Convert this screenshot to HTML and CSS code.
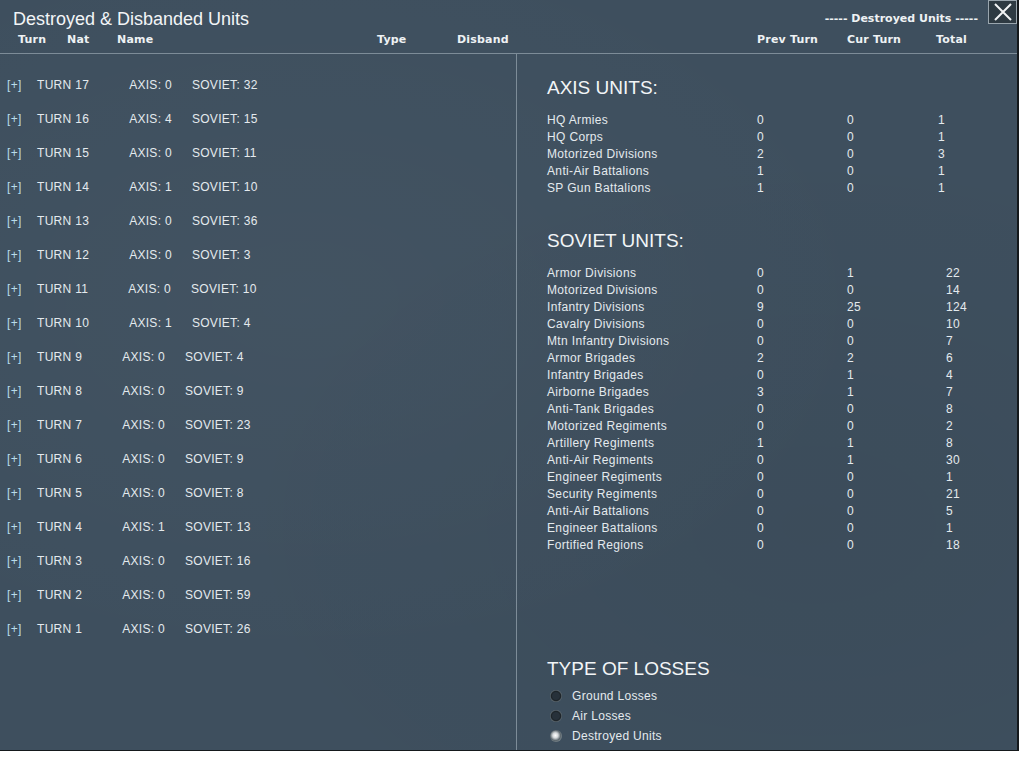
FILE: index.html
```html
<!DOCTYPE html>
<html lang="en">
<head>
  <meta charset="UTF-8">
  <title>Destroyed &amp; Disbanded Units</title>
  <link rel="stylesheet" href="styles.css">
</head>
<body>

<div class="window">
  <div class="header">
    <div class="title-row">
      <h1 class="title">Destroyed &amp; Disbanded Units</h1>
      <div class="subtitle">----- Destroyed Units -----</div>
    </div>
    <div class="col-row">
      <span class="c-turn">Turn</span>
      <span class="c-nat">Nat</span>
      <span class="c-name">Name</span>
      <span class="c-type">Type</span>
      <span class="c-disband">Disband</span>
      <span class="c-prev">Prev Turn</span>
      <span class="c-cur">Cur Turn</span>
      <span class="c-total">Total</span>
    </div>
    <button class="close-btn" aria-label="Close">
      <svg width="20" height="20" viewBox="0 0 20 20">
        <path d="M2 2 L18 18 M18 2 L2 18" stroke="#f2f4f5" stroke-width="2" fill="none"/>
      </svg>
    </button>
  </div>

  <div class="content">
    <div class="turn-list" id="turnList"></div>

    <div class="summary">
      <h2 class="section-title">AXIS UNITS:</h2>
      <div class="unit-table" id="axisTable"></div>

      <h2 class="section-title soviet-title">SOVIET UNITS:</h2>
      <div class="unit-table soviet" id="sovietTable"></div>

      <h2 class="section-title losses-title">TYPE OF LOSSES</h2>
      <div class="radio-group">
        <label class="radio"><span class="dot"></span>Ground Losses</label>
        <label class="radio"><span class="dot"></span>Air Losses</label>
        <label class="radio"><span class="dot on"></span>Destroyed Units</label>
      </div>
    </div>
  </div>
</div>

<script>
  const turns = [
    [17, 0, 32], [16, 4, 15], [15, 0, 11], [14, 1, 10], [13, 0, 36], [12, 0, 3],
    [11, 0, 10], [10, 1, 4], [9, 0, 4], [8, 0, 9], [7, 0, 23], [6, 0, 9],
    [5, 0, 8], [4, 1, 13], [3, 0, 16], [2, 0, 59], [1, 0, 26]
  ];

  const axis = [
    ['HQ Armies', 0, 0, 1],
    ['HQ Corps', 0, 0, 1],
    ['Motorized Divisions', 2, 0, 3],
    ['Anti-Air Battalions', 1, 0, 1],
    ['SP Gun Battalions', 1, 0, 1]
  ];

  const soviet = [
    ['Armor Divisions', 0, 1, 22],
    ['Motorized Divisions', 0, 0, 14],
    ['Infantry Divisions', 9, 25, 124],
    ['Cavalry Divisions', 0, 0, 10],
    ['Mtn Infantry Divisions', 0, 0, 7],
    ['Armor Brigades', 2, 2, 6],
    ['Infantry Brigades', 0, 1, 4],
    ['Airborne Brigades', 3, 1, 7],
    ['Anti-Tank Brigades', 0, 0, 8],
    ['Motorized Regiments', 0, 0, 2],
    ['Artillery Regiments', 1, 1, 8],
    ['Anti-Air Regiments', 0, 1, 30],
    ['Engineer Regiments', 0, 0, 1],
    ['Security Regiments', 0, 0, 21],
    ['Anti-Air Battalions', 0, 0, 5],
    ['Engineer Battalions', 0, 0, 1],
    ['Fortified Regions', 0, 0, 18]
  ];

  const list = document.getElementById('turnList');
  turns.forEach(t => {
    const row = document.createElement('div');
    row.className = 'turn-row';
    row.innerHTML =
      '<span class="expand">[+]</span>' +
      '<span class="turn">TURN ' + t[0] + '</span>' +
      '<span class="axis">AXIS: ' + t[1] + '</span>' +
      '<span class="sov">SOVIET: ' + t[2] + '</span>';
    list.appendChild(row);
  });

  function fillTable(id, rows) {
    const table = document.getElementById(id);
    rows.forEach(r => {
      const row = document.createElement('div');
      row.className = 'unit-row';
      row.innerHTML =
        '<span class="u-name">' + r[0] + '</span>' +
        '<span class="u-prev">' + r[1] + '</span>' +
        '<span class="u-cur">' + r[2] + '</span>' +
        '<span class="u-total">' + r[3] + '</span>';
      table.appendChild(row);
    });
  }

  fillTable('axisTable', axis);
  fillTable('sovietTable', soviet);
</script>

</body>
</html>
```

FILE: styles.css
```css
* {
  box-sizing: border-box;
}

body {
  margin: 0;
  background: #ffffff;
  font-family: 'Liberation Sans', Arial, sans-serif;
  color: #e4eaee;
}

.window {
  width: 1019px;
  height: 751px;
  background-color: #3e4f5e;
  background-image:
    radial-gradient(ellipse at 30% 40%, rgba(255,255,255,0.025), transparent 60%),
    radial-gradient(ellipse at 80% 70%, rgba(0,0,0,0.04), transparent 55%);
  border-right: 2px solid #15191c;
  border-bottom: 1px solid #15191c;
  box-shadow: 0 3px 0 #c4c5bd, 0 4px 0 #6a6b66;
  display: flex;
  flex-direction: column;
}

/* header */

.header {
  position: relative;
  height: 54px;
  flex-shrink: 0;
  border-bottom: 1px solid #7d8c98;
}

.title-row {
  display: flex;
  justify-content: space-between;
  align-items: flex-end;
  padding: 7px 39px 0 13px;
  height: 30px;
}

.title {
  margin: 0;
  font-size: 18px;
  font-weight: normal;
  line-height: 21px;
  color: #f2f5f7;
}

.subtitle {
  font-family: 'DejaVu Sans', Verdana, sans-serif;
  font-weight: bold;
  font-size: 11px;
  line-height: 13px;
  margin-bottom: 5px;
  color: #eef2f4;
}

.col-row {
  display: flex;
  padding: 2px 0 0 18px;
  font-family: 'DejaVu Sans', Verdana, sans-serif;
  font-weight: bold;
  font-size: 11px;
  line-height: 16px;
  letter-spacing: 0.2px;
  color: #eef2f4;
}

.c-turn { width: 49px; }
.c-nat { width: 50px; }
.c-name { width: 260px; }
.c-type { width: 80px; }
.c-disband { width: 300px; }
.c-prev { width: 90px; }
.c-cur { width: 89px; }

.close-btn {
  position: absolute;
  top: 0;
  right: 0;
  width: 29px;
  height: 24px;
  padding: 0;
  background: #2e3a42;
  border: 1px solid #9aa6ae;
  display: flex;
  align-items: center;
  justify-content: center;
  cursor: pointer;
}

/* content */

.content {
  flex: 1;
  display: flex;
}

.turn-list {
  width: 517px;
  border-right: 1px solid #7d8c98;
  padding-top: 14px;
}

.turn-row {
  height: 34px;
  line-height: 34px;
  font-size: 12px;
  letter-spacing: 0.3px;
  padding-left: 7px;
  display: flex;
}

.expand {
  width: 30px;
  color: #b9dcea;
}

.axis {
  margin-left: 40px;
}

.sov {
  margin-left: 20px;
}

.summary {
  flex: 1;
  padding: 23px 0 0 30px;
}

.section-title {
  margin: 0;
  font-size: 19px;
  font-weight: normal;
  line-height: 22px;
  color: #f2f5f7;
}

.soviet-title {
  margin-top: 33px;
}

.losses-title {
  margin-top: 104px;
}

.unit-table {
  margin-top: 13px;
}

.unit-row {
  display: flex;
  height: 17px;
  line-height: 17px;
  font-size: 12px;
  letter-spacing: 0.35px;
}

.u-name { width: 210px; }
.u-prev { width: 90px; }
.u-cur { width: 91px; }

.soviet .u-cur { width: 99px; }

.radio-group {
  margin-top: 6px;
}

.radio {
  display: flex;
  align-items: center;
  height: 20px;
  font-size: 12px;
  letter-spacing: 0.3px;
}

.dot {
  width: 12px;
  height: 12px;
  border-radius: 50%;
  margin: 0 10px 0 3px;
  background: radial-gradient(circle at 50% 50%, #27313a 40%, #1c2328 55%, #7a858b 75%, #46525a 100%);
}

.dot.on {
  background: radial-gradient(circle at 45% 45%, #ffffff 0%, #d4d8da 28%, #5f6a70 55%, #7a858b 75%, #46525a 100%);
}
```
